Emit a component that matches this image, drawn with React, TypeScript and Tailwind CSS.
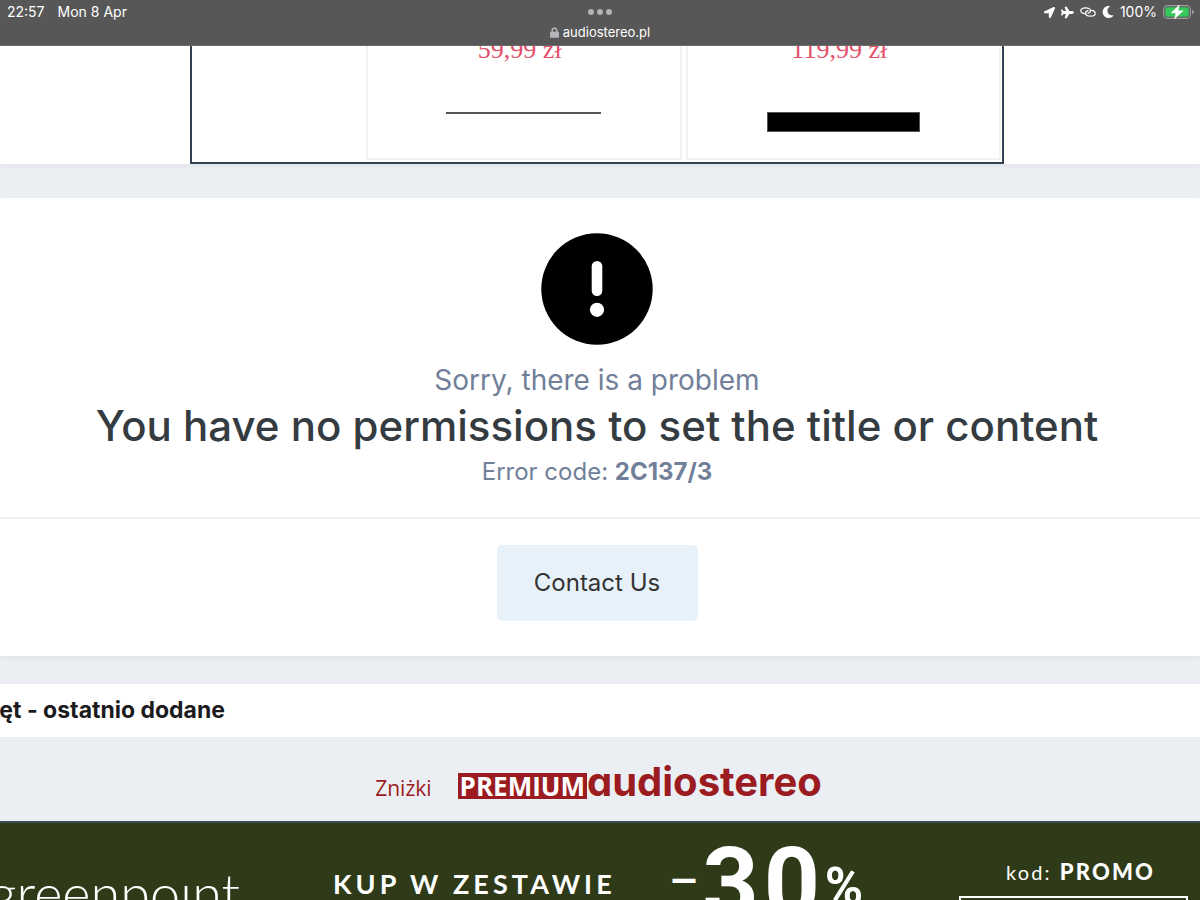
import { FaLocationArrow, FaPlane, FaMoon, FaLock } from "react-icons/fa";

function ChainIcon() {
  return (
    <svg viewBox="0 0 16 10" className="h-[10px] w-4" fill="none" stroke="currentColor" strokeWidth="1.2" strokeLinecap="round">
      <path d="M4.600 6.600C2.200 6.400.8 5 .8 3.600.8 2 2.600.9 5.300.9c3 0 5.200 1.200 5.200 2.900 0 1.300-1 2.100-2.600 2.500" />
      <path d="M11.400 3.400c2.400.2 3.800 1.600 3.800 3 0 1.600-1.800 2.700-4.500 2.700-3 0-5.200-1.200-5.200-2.900 0-1.300 1-2.100 2.600-2.500" />
    </svg>
  );
}

function BatteryIcon() {
  return (
    <svg viewBox="0 0 31 14" className="h-[14px] w-[31px]">
      <rect x=".6" y=".6" width="26.8" height="12.8" rx="4" fill="none" stroke="#a0a0a0" strokeWidth="1.1" />
      <rect x="2.2" y="2.2" width="23.6" height="9.6" rx="2.4" fill="#34c759" />
      <path d="M29 4.800c1.200.4 1.800 1.200 1.800 2.200S30.200 8.800 29 9.200z" fill="#a0a0a0" />
      <path d="M16.400 0 8 7.900h5L11.400 14l8.800-8.200h-5.200z" fill="#fff" stroke="#fff" strokeWidth=".5" />
    </svg>
  );
}

function StatusBar() {
  return (
    <header className="relative z-10 grid h-[46px] shrink-0 grid-cols-3 border-b border-[#6b6b6b] bg-[#575757] text-sm text-white">
      <div className="flex h-6 items-center gap-[13px] pl-[7px]">
        <time>22:57</time>
        <span>Mon 8 Apr</span>
      </div>
      <div className="flex flex-col items-center">
        <button aria-label="Multitasking" className="flex h-6 items-center gap-[3px]">
          <i className="size-[6px] rounded-full bg-[#b4b4b4]" />
          <i className="size-[6px] rounded-full bg-[#b4b4b4]" />
          <i className="size-[6px] rounded-full bg-[#b4b4b4]" />
        </button>
        <div className="flex h-4 items-center gap-1 text-[13px]">
          <FaLock className="h-[11px] w-[9px] text-[#b4b4b8]" />
          <span>audiostereo.pl</span>
        </div>
      </div>
      <div className="flex h-6 items-center justify-end gap-[6px] pr-[6px]">
        <FaLocationArrow className="size-[11px]" />
        <FaPlane className="size-[13px]" />
        <ChainIcon />
        <FaMoon className="size-[12px]" />
        <span>100%</span>
        <BatteryIcon />
      </div>
    </header>
  );
}

function Products() {
  return (
    <section className="flex h-[118px] shrink-0 justify-center bg-white pr-[6px] shadow-[0_2px_6px_rgba(0,0,0,0.05)]">
      <div className="flex w-[814px] gap-1 border-x-2 border-b-2 border-[#334155] pr-px pb-[2px] pl-[174px]">
        <article className="flex flex-1 flex-col items-center overflow-hidden border-x-2 border-b-2 border-[#f2f2f3]">
          <p className="-mt-3 pr-2 font-['Liberation_Serif',serif] text-[26px] leading-8 text-[#e2506a]">59,99 zł</p>
          <hr className="mt-[46px] w-[155px] border-t-2 border-[#555]" />
        </article>
        <article className="flex flex-1 flex-col items-center overflow-hidden border-x-2 border-b-2 border-[#f2f2f3]">
          <p className="-mt-3 pr-2 font-['Liberation_Serif',serif] text-[26px] leading-8 text-[#e2506a]">119,99 zł</p>
          <div className="mt-[46px] h-5 w-[153px] border border-[#555] bg-black" />
        </article>
      </div>
    </section>
  );
}

function ErrorIcon() {
  return (
    <svg viewBox="0 0 112 112" className="size-[112px]">
      <circle cx="56" cy="56" r="55.700" />
      <rect x="50.700" y="28" width="10.600" height="35" rx="5.300" fill="#fff" />
      <circle cx="56" cy="76.800" r="7.100" fill="#fff" />
    </svg>
  );
}

function ErrorCard() {
  return (
    <main className="mt-[34px] shrink-0 bg-white text-center text-[#717f99] shadow-[0_2px_6px_rgba(0,0,0,0.05)]">
      <div className="flex flex-col items-center border-b-2 border-[#eff0f2] pt-[35px] pr-[6px] pb-[26px]">
        <ErrorIcon />
        <p className="mt-[15px] text-[28px] leading-10">Sorry, there is a problem</p>
        <h1 className="text-[42px] leading-[52px] font-medium text-[#353c41]">
          You have no permissions to set the title or content
        </h1>
        <p className="mt-px text-[24px] leading-[38px]">
          Error code: <strong className="font-bold">2C137/3</strong>
        </p>
      </div>
      <div className="flex justify-center pt-[26px] pr-[6px] pb-[35px]">
        <button className="h-[76px] w-[201px] rounded-[5px] bg-[#e7f1fa] text-[24px] text-[#333]">Contact Us</button>
      </div>
    </main>
  );
}

function LatestHeading() {
  return (
    <section className="mt-7 shrink-0 bg-white">
      <h2 className="flex h-[53px] w-[225px] items-center justify-end overflow-hidden text-[23px] font-bold whitespace-nowrap text-[#1b1b1d]">
        zęt - ostatnio dodane
      </h2>
    </section>
  );
}

function PremiumLogo() {
  return (
    <section className="flex h-[84px] shrink-0 items-center justify-center pt-[6px] pr-[3px] text-[#9b1c20]">
      <a href="#premium" className="flex items-baseline">
        <span className="mr-[26px] font-['Open_Sans',sans-serif] text-[21px]">Zniżki</span>
        <span className="bg-[#9b1c20] px-[2px] font-['Open_Sans',sans-serif] text-[26px] leading-[26px] font-bold text-white">
          PREMIUM
        </span>
        <span className="text-[40px] leading-[48px] font-bold [font-feature-settings:'cv11']">audiostereo</span>
      </a>
    </section>
  );
}

function PromoBanner() {
  return (
    <section className="grid min-h-0 flex-1 grid-cols-[333fr_336fr_290fr_241fr] overflow-hidden border-t-2 border-[#3f4a58] bg-[#2f3a18] text-white">
      <div className="flex w-[240px] justify-end pt-[42px] font-['Lato',sans-serif] text-[54px] leading-[56px] font-light">
        greenpoınt
      </div>
      <p className="pt-[43px] font-['Lato',sans-serif] text-[27px] leading-9 font-bold tracking-[0.15em] whitespace-nowrap">
        KUP W ZESTAWIE
      </p>
      <p className="flex items-start font-['Roboto',sans-serif] font-bold">
        <span className="pt-[32px] text-[46px] leading-[52px] font-medium">–</span>
        <span className="ml-1 pt-3 text-[98px] leading-[98px] tracking-wider">30</span>
        <span className="pt-[38px] text-[52px] leading-[52px]">%</span>
      </p>
      <div className="pr-3 text-center font-['Lato',sans-serif] text-[22px]">
        <p className="pt-[34px] pl-[14px] leading-[30px] tracking-widest">
          <span className="text-[20px]">kod:</span> <strong className="font-black">PROMO</strong>
        </p>
        <div className="mt-[9px] h-14 border-2 border-white" />
      </div>
    </section>
  );
}

export default function App() {
  return (
    <div className="flex h-screen flex-col overflow-hidden bg-[#ebeff4] font-['Inter',sans-serif]">
      <StatusBar />
      <Products />
      <ErrorCard />
      <LatestHeading />
      <PremiumLogo />
      <PromoBanner />
    </div>
  );
}
